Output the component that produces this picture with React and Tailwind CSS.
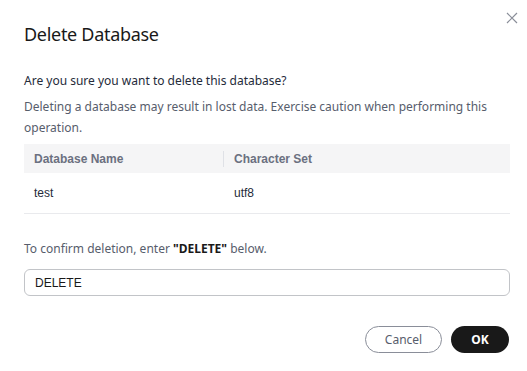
export default function App() {
  return (
    <div className="w-[527px] h-[371px] bg-white relative" style={{ fontFamily: '"Noto Sans", sans-serif' }}>
      <button className="absolute left-[506px] top-[12px] w-[12px] h-[12px] text-[#8a8e99]">
        <svg width="12" height="12" viewBox="0 0 12 12" fill="none" stroke="currentColor" strokeWidth="1.2">
          <path d="M1 1L11 11M11 1L1 11" />
        </svg>
      </button>
      <div className="pl-[24px] pr-[17px] pt-[21px]">
        <h1 className="text-[18px] leading-[26px] text-[#191919] font-normal tracking-[-0.3px]">Delete Database</h1>
        <p className="mt-[25px] text-[12px] leading-[18px] text-[#252b3a]">Are you sure you want to delete this database?</p>
        <p className="mt-[6px] text-[12px] leading-[21px] text-[#575d6c] pr-[20px]">
          Deleting a database may result in lost data. Exercise caution when performing this operation.
        </p>
        <div className="mt-[6px] text-[12px]" style={{ fontFamily: '"Liberation Sans", Arial, sans-serif' }}>
          <div className="flex items-center h-[29px] bg-[#f5f5f6] text-[#6b7080] font-bold">
            <div className="w-[199px] pl-[10px]">Database Name</div>
            <div className="w-px h-[16px] bg-[#dfe1e6]"></div>
            <div className="pl-[10px]">Character Set</div>
          </div>
          <div className="flex items-center h-[41px] border-b border-[#e9eaed] text-[#252b3a]">
            <div className="w-[200px] pl-[10px]">test</div>
            <div className="pl-[10px]">utf8</div>
          </div>
        </div>
        <p className="mt-[26px] text-[12px] leading-[18px] text-[#575d6c]">
          To confirm deletion, enter <span className="font-bold text-[#191919]">"DELETE"</span> below.
        </p>
        <div className="mt-[11px] h-[27px] border border-[#c2c4c8] rounded-[6px] flex items-center px-[10px] text-[12px] text-[#191919]" style={{ fontFamily: '"Liberation Sans", Arial, sans-serif' }}>
          DELETE
        </div>
        <div className="mt-[30px] flex justify-end gap-[9px] pr-[1px]">
          <button className="w-[77px] h-[27px] rounded-full border border-[#8a8e99] text-[12px] text-[#575d6c] bg-white">Cancel</button>
          <button className="w-[58px] h-[27px] rounded-full bg-[#191919] text-[12px] font-bold text-white">OK</button>
        </div>
      </div>
    </div>
  );
}
